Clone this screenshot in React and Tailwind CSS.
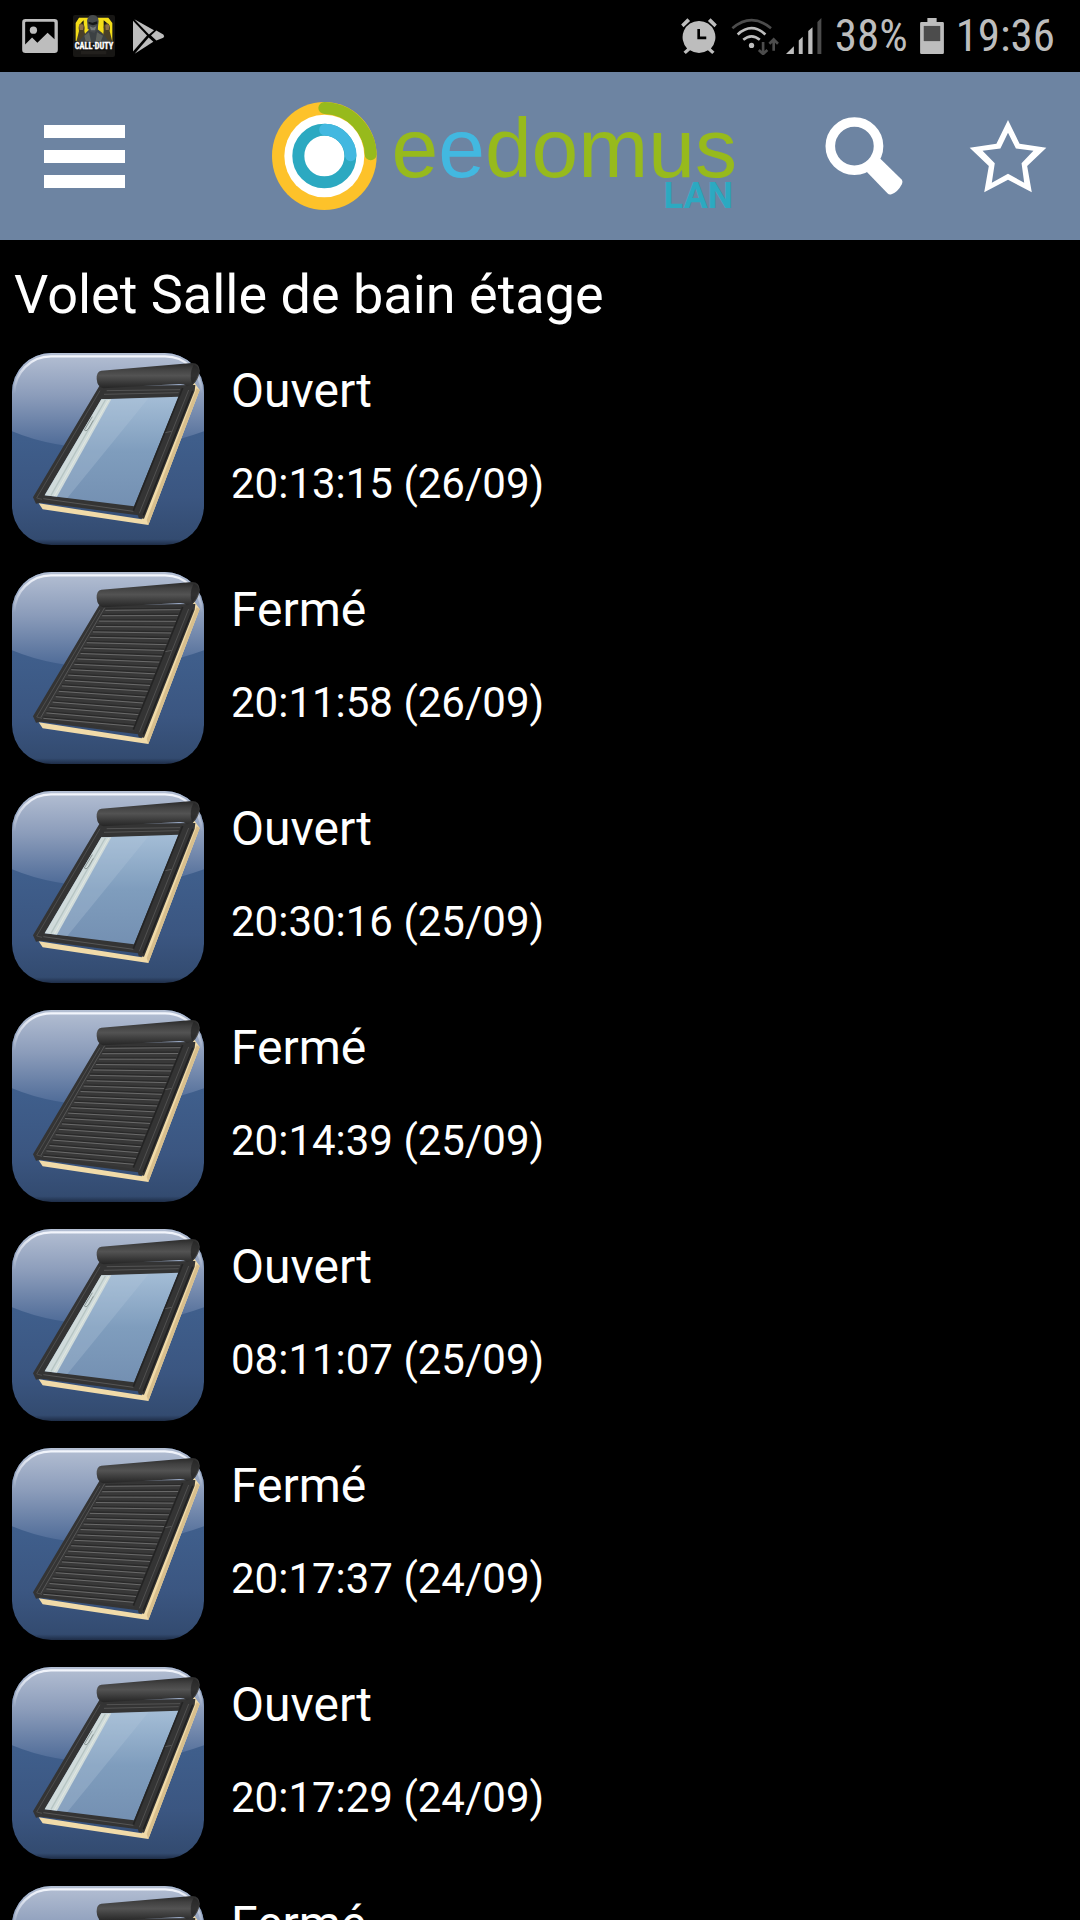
const HISTORY = [
  { state: 'Ouvert', time: '20:13:15 (26/09)' },
  { state: 'Fermé', time: '20:11:58 (26/09)' },
  { state: 'Ouvert', time: '20:30:16 (25/09)' },
  { state: 'Fermé', time: '20:14:39 (25/09)' },
  { state: 'Ouvert', time: '08:11:07 (25/09)' },
  { state: 'Fermé', time: '20:17:37 (24/09)' },
  { state: 'Ouvert', time: '20:17:29 (24/09)' },
  { state: 'Fermé', time: '20:14:02 (23/09)' },
];

// slat lines run between the left and right rails of the shutter
const SLATS = Array.from({ length: 21 }, (_, i) => {
  const t = i / 20;
  return {
    x1: 316 - 186 * t,
    y1: 154 + 324 * t,
    x2: 542 - 140 * t,
    y2: 152 + 350 * t,
  };
});

function StatusBar() {
  return (
    <div className="flex h-[72px] shrink-0 items-center justify-between pl-[22px] pr-[25px] text-[#bdbdbd]">
      <div className="flex items-center">
        <svg viewBox="66 56 108 103" className="h-[34px] w-9" fill="currentColor">
          <path
            fillRule="evenodd"
            d="M76 56H164Q174 56 174 66V149Q174 159 164 159H76Q66 159 66 149V66Q66 56 76 56ZM78 64Q75 64 75 67V133L96 112L112 128L143 98L164 117V67Q164 64 161 64Z"
          />
          <circle cx="100" cy="90" r="11" />
        </svg>
        <CallOfDutyIcon />
        <svg viewBox="399 56 96 104" className="ml-[18px] h-[35px] w-8" fill="currentColor">
          <path d="M399 61L441 105L399 153Z" />
          <path d="M403 56L462 89L447 102Z" />
          <path d="M469 90L490 102Q495 107 490 112L469 120L453 105Z" />
          <path d="M446 111L460 124L404 160Z" />
        </svg>
      </div>
      <div className="flex items-center">
        <svg viewBox="66 53 108 109" className="h-9 w-9" fill="currentColor">
          <path
            fillRule="evenodd"
            d="M120 62A49 49 0 0 1 156 145L167 155L160 162L147 151A49 49 0 0 1 93 151L80 162L73 155L84 145A49 49 0 0 1 120 62ZM115 86V117H142V109H123V86Z"
          />
          <path d="M66 73L85 54L93 62L73 81ZM155 54L174 73L167 81L147 62Z" />
        </svg>
        <svg viewBox="216 48 146 112" className="ml-[14px] h-[37px] w-[49px]" fill="none">
          <path d="M219 79Q277 30 336 79" stroke="#4c4c4c" strokeWidth="8" />
          <path d="M235 98Q277 60 319 98" stroke="#bdbdbd" strokeWidth="8" />
          <path d="M252 114Q277 93 302 114" stroke="#bdbdbd" strokeWidth="8" />
          <circle cx="277" cy="131" r="8" fill="#bdbdbd" />
          <path
            d="M312 121V154M299 145L312 157L325 145M344 147V114M331 126L344 113L357 126"
            stroke="#4c4c4c"
            strokeWidth="8"
          />
        </svg>
        <svg viewBox="378 50 110 110" className="ml-[6px] h-9 w-9" fill="currentColor">
          <path d="M378 160L402 136V160Z" />
          <path d="M417 119L429 107V160H417Z" />
          <path d="M446 90L459 78V160H446Z" />
          <path d="M474 62L486 50V160H474Z" fill="#4c4c4c" />
        </svg>
        <span className="ml-[13px] font-['Roboto_Condensed','Liberation_Sans_Narrow',Roboto,sans-serif] text-[45px] leading-[74px]">
          38%
        </span>
        <svg viewBox="780 53 72 109" className="ml-3 h-9 w-6">
          <path
            fill="#bdbdbd"
            d="M802 53H830V65H848Q852 65 852 69V158Q852 162 848 162H784Q780 162 780 158V69Q780 65 784 65H802Z"
          />
          <path fill="#4c4c4c" d="M791 77H841V123H791Z" />
        </svg>
        <span className="ml-3 font-['Roboto_Condensed','Liberation_Sans_Narrow',Roboto,sans-serif] text-[45px] leading-[74px]">
          19:36
        </span>
      </div>
    </div>
  );
}

function CallOfDutyIcon() {
  return (
    <svg viewBox="0 0 126 126" className="ml-[15px] h-[42px] w-[42px]">
      <rect width="126" height="126" rx="6" fill="#171614" />
      <path d="M8 78V24L18 8H50V78ZM74 78V8H106L118 24V78Z" fill="#f3dd18" />
      <path d="M24 24L32 16V40H24ZM92 16L102 24V38H92Z" fill="#171614" />
      <path d="M10 80L18 48Q14 26 26 24Q38 28 34 48L42 80ZM88 80L92 48Q90 26 102 24Q114 28 110 48L118 80Z" fill="#4a4026" />
      <path d="M18 31Q26 24 32 32L30 45H20ZM97 31Q104 24 109 32L107 45H98Z" fill="#8d7047" />
      <path d="M14 84L38 54L48 44H76L88 54L112 84Z" fill="#3c4143" />
      <path d="M42 16Q46 0 60 0Q76 1 77 18L74 42L64 54L52 50L44 40Z" fill="#474b4d" />
      <path d="M46 20L58 23L73 19V27L60 31L47 27Z" fill="#17191a" />
      <path d="M50 34L60 38L70 34L66 46H54Z" fill="#777b7b" />
      <path d="M34 62L48 52L54 78H38ZM72 52L90 62L84 78H68Z" fill="#5d615c" />
      <text
        x="63"
        y="102"
        textAnchor="middle"
        fill="#ffffff"
        stroke="#ffffff"
        strokeWidth="1"
        className="font-['Roboto_Condensed','Liberation_Sans_Narrow',sans-serif] text-[25px] font-bold"
      >
        CALL·DUTY
      </text>
      <path d="M24 108H100V118H24Z" fill="#22201d" />
    </svg>
  );
}

function Logo() {
  return (
    <a href="#" aria-label="eedomus LAN" className="flex items-center gap-[14px]">
      <svg viewBox="66 66 315 324" className="h-[108px] w-[105px]" fill="none">
        <ellipse cx="223" cy="228" rx="157" ry="162" fill="#fdc22a" />
        <path d="M223 84Q292 86 334 143Q362 182 362 223" stroke="#97ba1c" strokeWidth="36" strokeLinecap="round" />
        <ellipse cx="223" cy="228" rx="120" ry="124" fill="#ffffff" />
        <ellipse cx="223" cy="228" rx="78" ry="79" stroke="#2ca9c1" strokeWidth="36" />
        <path d="M225 149Q258 150 280 174Q302 198 302 226" stroke="#42b8e0" strokeWidth="35" strokeLinecap="round" />
      </svg>
      <span className="flex flex-col items-end">
        <span className="font-['Liberation_Sans',sans-serif] text-[84px] leading-[92px] text-[#97ba1c]">
          e<span className="text-[#42b8e0]">e</span>domus
        </span>
        <span className="-mt-3 pr-1 font-[Roboto,sans-serif] text-[36px] font-bold leading-[28px] text-[#2ca9c1]">
          LAN
        </span>
      </span>
    </a>
  );
}

function Header() {
  return (
    <header className="flex h-[168px] shrink-0 items-center bg-[#6d84a2]">
      <button type="button" aria-label="Menu" className="flex h-full w-[168px] flex-col items-center justify-center gap-3">
        <span className="h-[13px] w-[81px] bg-white" />
        <span className="h-[13px] w-[81px] bg-white" />
        <span className="h-[13px] w-[81px] bg-white" />
      </button>
      <div className="flex flex-1 justify-end pr-[55px]">
        <Logo />
      </div>
      <button type="button" aria-label="Rechercher" className="flex h-full w-36 items-center justify-center">
        <svg viewBox="135 110 234 236" className="h-[78px] w-[78px]">
          <circle cx="223" cy="198" r="73" fill="none" stroke="#ffffff" strokeWidth="29" />
          <path d="M260 276L300 235L365 298Q371 304 366 314Q355 336 335 344Q328 346 323 341Z" fill="#ffffff" />
        </svg>
      </button>
      <button type="button" aria-label="Favori" className="flex h-full w-36 items-center justify-center">
        <svg viewBox="568 110 232 236" className="h-[78px] w-[78px]">
          <path
            fillRule="evenodd"
            fill="#ffffff"
            d="M684 119L719 191L800 203L742 258L756 338L684 300L612 338L626 258L568 203L649 191ZM684 158L661 205L607 212L644 250L635 309L684 282L733 309L725 250L761 212L708 205Z"
          />
        </svg>
      </button>
    </header>
  );
}

function IconDefs() {
  return (
    <svg className="absolute h-0 w-0" aria-hidden="true">
      <defs>
        <linearGradient id="tile" x1="0" y1="0" x2="0" y2="1">
          <stop offset="0" stopColor="#47658f" />
          <stop offset="0.45" stopColor="#3f5e8b" />
          <stop offset="0.75" stopColor="#3b5681" />
          <stop offset="0.97" stopColor="#334b70" />
          <stop offset="1" stopColor="#1e2d47" />
        </linearGradient>
        <linearGradient id="gloss" x1="0" y1="0" x2="0" y2="1">
          <stop offset="0" stopColor="#b4bfd3" />
          <stop offset="0.45" stopColor="#8b9cba" />
          <stop offset="1" stopColor="#4c6996" />
        </linearGradient>
        <linearGradient id="rim" x1="0" y1="0" x2="0" y2="1">
          <stop offset="0" stopColor="#f2f5fc" />
          <stop offset="0.2" stopColor="#f2f5fc" stopOpacity="0" />
        </linearGradient>
        <linearGradient id="glass" x1="0" y1="0" x2="0" y2="1">
          <stop offset="0" stopColor="#a4bdd6" />
          <stop offset="0.5" stopColor="#7f9dbd" />
          <stop offset="1" stopColor="#7490b2" />
        </linearGradient>
        <linearGradient id="roller" x1="0" y1="0" x2="0" y2="1">
          <stop offset="0" stopColor="#292929" />
          <stop offset="0.25" stopColor="#424242" />
          <stop offset="0.5" stopColor="#535353" />
          <stop offset="0.8" stopColor="#373737" />
          <stop offset="1" stopColor="#252525" />
        </linearGradient>
        <clipPath id="tileClip">
          <rect x="36" y="39" width="576" height="576" rx="118" />
        </clipPath>
      </defs>
    </svg>
  );
}

function ShutterIcon({ closed }) {
  return (
    <svg viewBox="36 39 576 576" className="h-48 w-48 shrink-0" aria-hidden="true">
      <g clipPath="url(#tileClip)">
        <rect x="36" y="39" width="576" height="576" fill="url(#tile)" />
        <path d="M36 39H612V274Q470 326 324 326Q160 326 36 274Z" fill="url(#gloss)" />
      </g>
      <rect x="43" y="49" width="562" height="560" rx="110" fill="none" stroke="url(#rim)" strokeWidth="7" />

      {/* wooden frame */}
      <path d="M580 124L599 150L445 555L128 508L116 490L425 538L578 140Z" fill="#f1dba9" />
      <path d="M599 150L445 555L440 540L590 145Z" fill="#d8bf8d" />
      {/* outer casing */}
      <path d="M298 138L586 135L584 152L432 536L416 534L414 526L122 488L108 491L99 472Z" fill="#343434" />

      {closed ? (
        <g>
          <path d="M316 146L546 145L402 516L122 476Z" fill="#383838" />
          {SLATS.map((s) => (
            <g key={s.y1}>
              <line x1={s.x1} y1={s.y1 - 4} x2={s.x2} y2={s.y2 - 4} stroke="#2a2a2a" strokeWidth="4" />
              <line x1={s.x1} y1={s.y1} x2={s.x2} y2={s.y2} stroke="#6a6a6a" strokeWidth="3" />
            </g>
          ))}
          <path d="M314 146L122 476" stroke="#666666" strokeWidth="2" />
        </g>
      ) : (
        <g>
          <path d="M304 178L536 170L402 499L134 466Z" fill="url(#glass)" />
          <path d="M334 178L446 174L202 474L171 470Z" fill="#b2c8dc" fillOpacity="0.3" />
          <path d="M304 178L334 178L171 470L134 466Z" fill="#d0dbdb" />
          <path d="M316 180L153 466" stroke="#b6c5c3" strokeWidth="4" />
          <path d="M326 180L163 468" stroke="#e2e9e0" strokeWidth="3" />
          <path d="M277 230L253 270Q257 277 265 267L280 241" fill="none" stroke="#8d9997" strokeWidth="3" />
          <path d="M320 152L540 149M312 163L536 158" stroke="#535353" strokeWidth="3" />
          <path d="M130 476L400 514" stroke="#565656" strokeWidth="3" />
        </g>
      )}

      {/* right rail */}
      <path d="M548 144L400 512" stroke="#242424" strokeWidth="5" />
      <path d="M566 150L418 520" stroke="#505050" strokeWidth="3" />
      <path d="M578 152L430 526" stroke="#1f1f1f" strokeWidth="4" />
      <path d="M496 278L515 274" stroke="#565656" strokeWidth="3" />
      <path d="M300 152L110 474L126 478" fill="none" stroke="#4d4d4d" strokeWidth="3" />
      {/* roller */}
      <path
        d="M304 92L576 69Q598 68 599 92Q598 116 578 135L560 139Q552 130 536 132L310 145Q292 142 290 117Q289 94 304 92Z"
        fill="url(#roller)"
      />
      <path d="M581 74Q599 78 597 96Q592 118 576 132Q566 103 581 74Z" fill="#242424" fillOpacity="0.7" />
    </svg>
  );
}

export default function App() {
  return (
    <div className="flex h-screen flex-col overflow-hidden bg-black font-[Roboto,sans-serif] text-white">
      <IconDefs />
      <StatusBar />
      <Header />
      <main className="min-h-0 flex-1 overflow-hidden">
        <h1 className="px-[14px] pb-1 text-[54px] leading-[109px]">Volet Salle de bain étage</h1>
        <ul className="flex flex-col gap-[27px] pl-3">
          {HISTORY.map(({ state, time }) => (
            <li key={time} className="flex gap-[27px]">
              <ShutterIcon closed={state === 'Fermé'} />
              <div className="flex flex-col gap-[17px]">
                <span className="text-[48px] leading-[76px]">{state}</span>
                <time className="text-[42px] leading-[76px]">{time}</time>
              </div>
            </li>
          ))}
        </ul>
      </main>
    </div>
  );
}
